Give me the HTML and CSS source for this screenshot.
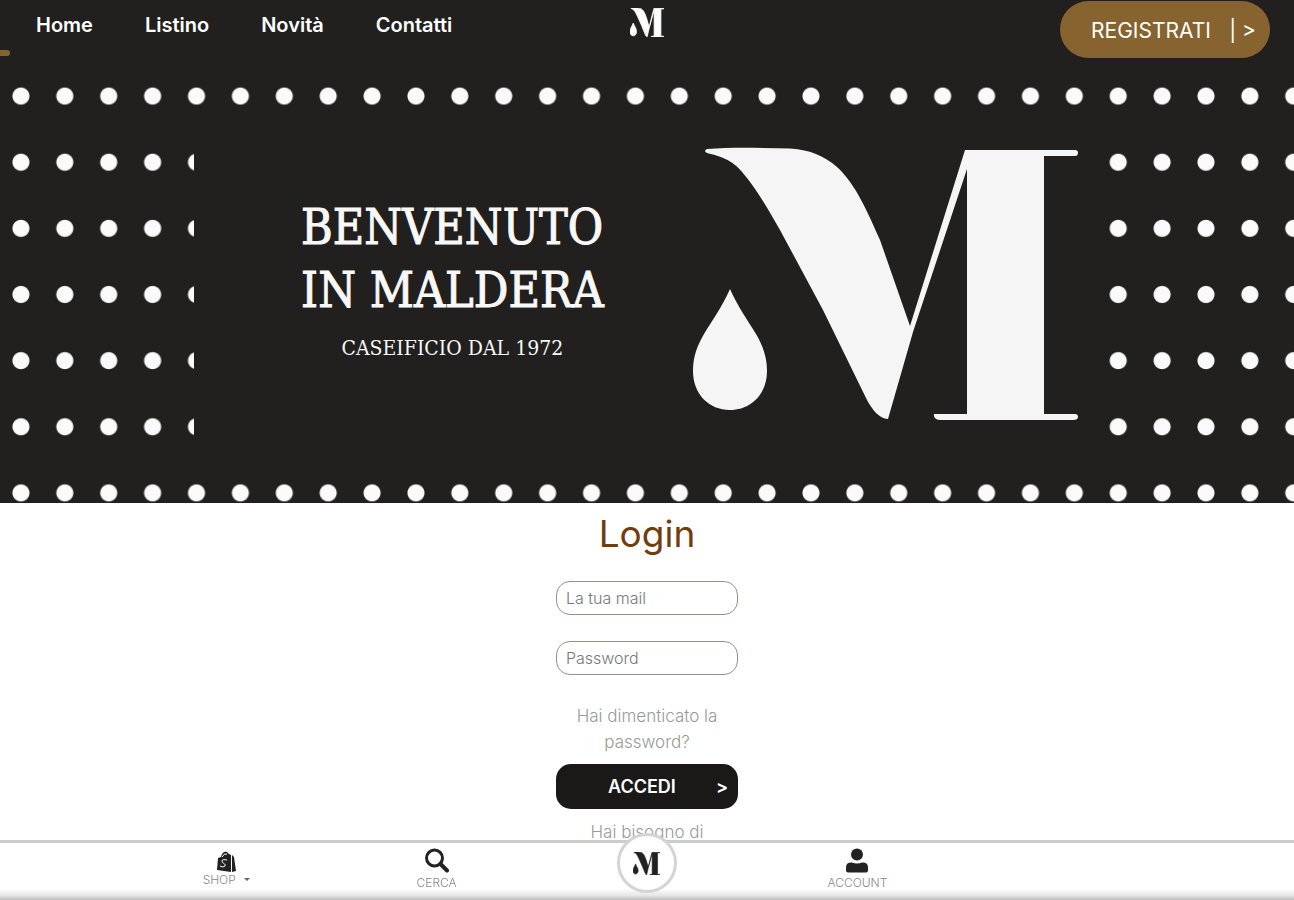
FILE: index.html
```html
<!DOCTYPE html>
<html lang="it">
<head>
<meta charset="utf-8">
<meta name="viewport" content="width=device-width, initial-scale=1">
<title>Maldera - Login</title>
<link rel="stylesheet" href="styles.css">
</head>
<body>
<svg class="sprite" aria-hidden="true">
  <symbol id="logo" viewBox="0 0 386 274" preserveAspectRatio="none">
    <path d="M14 2C40 0 70 1 97 1.500C118 3 131 9 144 20C160 35 170 54 187 93L217 179L272 3H382Q385 3 385 5.500Q385 9 382 9H351V267H382Q385 267 385 270Q385 273 380 273H248Q240 273 241 267H274V22L220 185L195 272C186 272 179 262 174 253L130 163L87 83C74 60 65 45 54 31C42 15 34 11 14 6Q10 4 14 2Z"/>
    <path d="M37 142C45 160 54 172 63 187C70 199 74 210 74 224C74 247 58 263 37 263C16 263 0 247 0 224C0 210 4 199 11 187C20 172 29 160 37 142Z"/>
  </symbol>
</svg>

<header class="topbar">
  <nav class="menu">
    <a href="#">Home</a>
    <a href="#">Listino</a>
    <a href="#">Novità</a>
    <a href="#">Contatti</a>
  </nav>
  <a class="brand" href="#" aria-label="Maldera"><svg><use href="#logo"/></svg></a>
  <a class="register" href="#"><span>REGISTRATI</span><span>| &gt;</span></a>
  <span class="marker"></span>
</header>

<section class="hero">
  <div class="panel">
    <div class="welcome">
      <h1>BENVENUTO<br>IN MALDERA</h1>
      <p>CASEIFICIO DAL 1972</p>
    </div>
    <svg class="hero-logo" aria-hidden="true"><use href="#logo"/></svg>
  </div>
</section>

<main>
  <form class="login">
    <h2>Login</h2>
    <input type="email" placeholder="La tua mail" aria-label="La tua mail">
    <input type="password" placeholder="Password" aria-label="Password">
    <a class="help" href="#">Hai dimenticato la password?</a>
    <button type="submit"><span>ACCEDI</span><span>&gt;</span></button>
    <a class="help" href="#">Hai bisogno di</a>
  </form>
</main>

<nav class="dock">
  <a class="shop" href="#">
    <svg viewBox="0 0 20 22" aria-hidden="true">
      <path d="M2 7L5 6C6 1 9 0 11 1L13 3L15 4V21L1 19Z"/>
      <path d="M16 4L18 6L20 20L16 21Z"/>
      <path class="cut" d="M6 6Q8 2 11 3M11 9Q6 8 6 10C6 13 10 12 9 15Q7 17 4 15"/>
    </svg>
    <span class="drop">SHOP</span>
  </a>
  <a href="#">
    <svg class="large" viewBox="0 0 24 24" aria-hidden="true"><circle class="line" cx="9.500" cy="9.500" r="8"/><path class="line thick" d="M15.500 15.500L22 22"/></svg>
    <span>CERCA</span>
  </a>
  <a class="round" href="#" aria-label="Maldera"><svg><use href="#logo"/></svg></a>
  <a href="#">
    <svg class="large" viewBox="0 0 24 24" aria-hidden="true"><circle cx="12" cy="6" r="6"/><path d="M1 22V19Q1 14 6 14H7Q12 16 17 14H18Q23 14 23 19V22Q23 24 21 24H3Q1 24 1 22Z"/></svg>
    <span>ACCOUNT</span>
  </a>
</nav>
</body>
</html>
```
FILE: styles.css
```css
* { box-sizing: border-box; }

body {
  margin: 0;
  background: #fff;
  font-family: Inter, "Open Sans", sans-serif;
}

a { color: inherit; text-decoration: none; }
h1, h2, p { margin: 0; }
.sprite { position: absolute; width: 0; height: 0; }

.topbar {
  position: relative;
  display: grid;
  grid-template-columns: 1fr auto 1fr;
  align-items: start;
  height: 62px;
  padding: 1px 24px 0 36px;
  background: #21201e;
  color: #fff;
}

.menu {
  display: flex;
  gap: 52px;
  padding-top: 12px;
  font-size: 20px;
  line-height: 24px;
  font-weight: 600;
}

.brand { padding: 7px 12px 0 0; }
.brand svg { display: block; width: 34px; height: 29px; fill: #fff; stroke: #fff; stroke-width: 8px; }

.register {
  display: flex;
  justify-content: space-between;
  align-items: center;
  justify-self: end;
  width: 210px;
  height: 57px;
  padding: 2px 14px 0 31px;
  border-radius: 32px;
  background: #87632f;
  font-size: 21px;
}

.marker {
  position: absolute;
  left: 0;
  top: 50px;
  width: 10px;
  height: 6px;
  border-radius: 0 4px 4px 0;
  background: #87632f;
}

.hero {
  padding: 45px 15% 25px;
  background-color: #21201e;
  background-image: radial-gradient(circle, #fafafa 8px, transparent 9px);
  background-size: 3.393% 15%;
  background-position: -1px 1px;
}

.panel {
  display: flex;
  align-items: center;
  justify-content: space-between;
  height: 371px;
  padding: 0 21px 18px 107px;
  background: #21201e;
  color: #f8f8f8;
  font-family: "DejaVu Serif Condensed", "DejaVu Serif", serif;
  text-align: center;
}

.welcome { padding-bottom: 10px; }
h1 {
  font-size: 48px;
  line-height: 63px;
  font-weight: 400;
  text-align: left;
  white-space: nowrap;
  -webkit-text-stroke: 1px #f8f8f8;
}
.welcome p { margin-top: 12px; font-size: 21px; line-height: 28px; }
.hero-logo { width: 386px; height: 274px; fill: #f5f5f5; }

.login {
  display: flex;
  flex-direction: column;
  align-items: stretch;
  width: 182px;
  margin: 0 auto;
  text-align: center;
}

h2 {
  margin: 9px 0 25px;
  color: #713d0b;
  font-size: 37px;
  line-height: 44px;
  font-weight: 400;
}

.login input {
  width: 100%;
  height: 34px;
  margin-bottom: 26px;
  padding: 0 9px;
  border: 1px solid #9c8e83;
  border-radius: 14px;
  background: #fff;
  font: 300 16px Inter, sans-serif;
}

.login input::placeholder { color: #777; opacity: 1; }

.help {
  color: #999;
  font-size: 17px;
  line-height: 26px;
  font-weight: 300;
}

.login input + .help { margin-top: 2px; }

.login button {
  display: flex;
  justify-content: space-between;
  align-items: center;
  height: 45px;
  margin: 9px 0 10px;
  padding: 0 10px 0 52px;
  border: 0;
  border-radius: 15px;
  background: #1a1917;
  color: #fff;
  font: 600 18px Inter, sans-serif;
}

.dock {
  position: fixed;
  left: 0;
  right: 0;
  bottom: 0;
  display: grid;
  grid-template-columns: repeat(5, 1fr);
  justify-items: center;
  height: 60px;
  padding: 0 121px;
  border-top: 3px solid #ccc;
  background: linear-gradient(#fff 80%, #e6e6e6 92%, #bbb);
  color: #888;
  font-size: 12px;
  line-height: 14px;
  font-weight: 300;
}

.dock a {
  display: flex;
  flex-direction: column;
  align-items: center;
  padding-top: 5px;
}

.dock svg { width: 20px; height: 22px; fill: #222; }
.dock .shop { padding-top: 8px; }
.dock .large { width: 24px; height: 25px; margin-bottom: 3px; }
.dock .line { fill: none; stroke: #222; stroke-width: 3; stroke-linecap: round; }
.dock .thick { stroke-width: 4; }
.dock .cut { fill: none; stroke: #fff; stroke-width: 1; }

.drop::after {
  content: "";
  display: inline-block;
  margin-left: 8px;
  border: 3px solid transparent;
  border-top-color: #666;
  border-bottom: 0;
  vertical-align: 3px;
}

.dock .round {
  justify-content: center;
  width: 60px;
  height: 60px;
  margin-top: -10px;
  padding: 0;
  border: 3px solid #d4d4d4;
  border-radius: 50%;
  background: #fff;
}

.dock .round svg { width: 27px; height: 23px; stroke: #222; stroke-width: 8px; }
```
